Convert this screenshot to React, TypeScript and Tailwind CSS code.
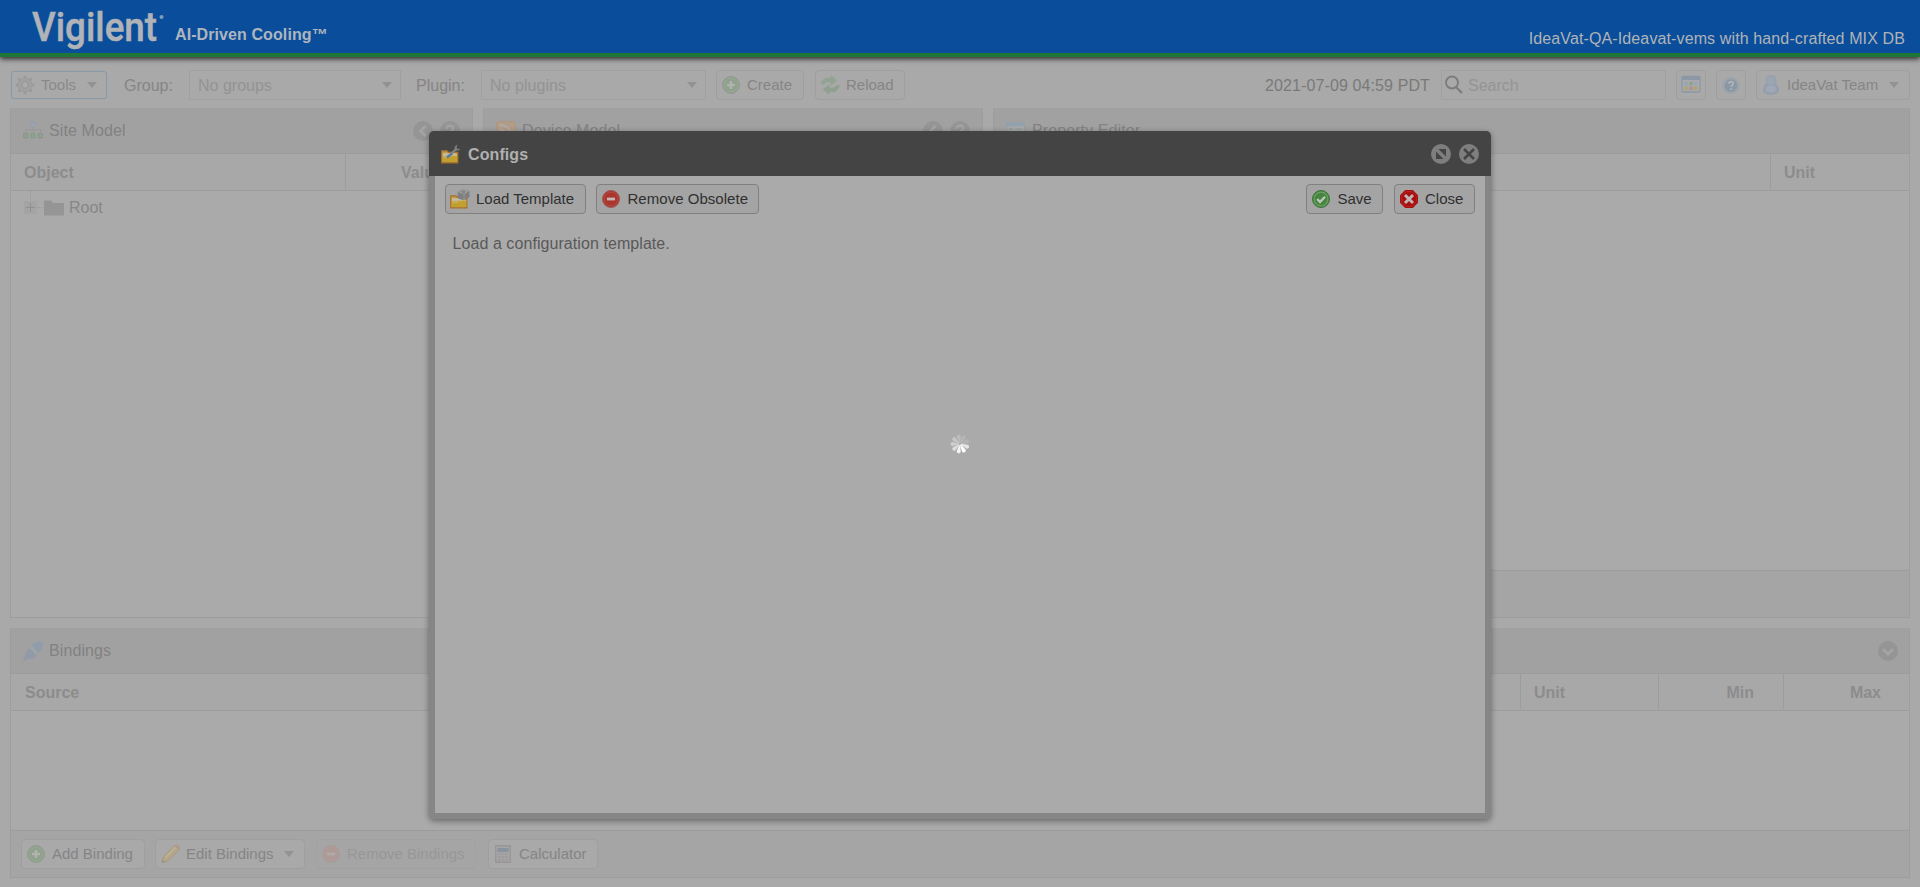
import React from "react";

type Kids = { children?: React.ReactNode; className?: string };

const Svg = ({ children, className = "" }: Kids) => (
  <svg viewBox="0 0 20 20" className={"block h-5 w-5 shrink-0 " + className}>{children}</svg>
);

const Gear = () => (
  <Svg>
    <g stroke="#9a9a9a" strokeWidth="3">
      {[0, 45, 90, 135].map((a) => (
        <path key={a} d="M10 .7v18.6" transform={`rotate(${a} 10 10)`} />
      ))}
    </g>
    <circle cx="10" cy="10" r="6.800" fill="#a2a2a2" stroke="#9b9b9b" />
    <circle cx="10" cy="10" r="3.600" fill="none" stroke="#9a9a9a" strokeWidth="1.400" />
    <circle cx="10" cy="10" r="2.200" fill="#ababab" />
  </Svg>
);
const PlusBall = () => (
  <Svg>
    <circle cx="10" cy="10" r="8.500" fill="#8fa08c" stroke="#939e91" />
    <circle cx="10" cy="10" r="6.600" fill="none" stroke="#98a995" />
    <path d="M10 6v8M6 10h8" stroke="#b0b3ae" strokeWidth="2.600" />
  </Svg>
);
const MinusBall = ({ faded = false }: { faded?: boolean }) => (
  <Svg>
    <circle cx="10" cy="10" r="8.500" fill={faded ? "#ad9996" : "#a8352e"} stroke={faded ? "#aa9d9b" : "#9c5a56"} />
    <circle cx="10" cy="10" r="6.800" fill="none" stroke={faded ? "#ae9e9b" : "#b8493f"} />
    <path d="M6 10h8" stroke={faded ? "#b1aaa9" : "#c6b5b3"} strokeWidth="2.800" />
  </Svg>
);
const Reload = () => (
  <Svg>
    <path d="M1 9C2 3.500 7 2 11 3.500V.5l6 5-6 5V7.500C8 6.500 5 7 4.500 9.500z" fill="#90a491" stroke="#96a396" strokeWidth=".6" />
    <path d="M19.500 10.500c-1 6-6 7.500-10.500 6v3l-6-5 6-5v3c3 1 6 .5 7-2z" fill="#8fa090" stroke="#96a396" strokeWidth=".6" />
  </Svg>
);
const SiteTree = () => (
  <Svg>
    <path d="M10 6v4M2.500 12V8.700h15V12M10 9v3" fill="none" stroke="#989898" />
    <rect x="8" y="1.500" width="4" height="4" fill="#9ca4ae" stroke="#93a0af" />
    {[0.7, 8, 15.3].map((x) => (
      <rect key={x} x={x} y="12.700" width="4" height="4" fill="#92a391" stroke="#849883" />
    ))}
  </Svg>
);
const Feed = () => (
  <Svg>
    <rect x=".5" y=".5" width="19" height="19" rx="2" fill="#b09d89" stroke="#b0957d" />
    <circle cx="5" cy="15" r="1.700" fill="#b3aaa2" />
    <path d="M3.500 8.500a8 8 0 0 1 8 8M3.500 4a12.500 12.500 0 0 1 12.500 12.500" fill="none" stroke="#b3aaa2" strokeWidth="2" />
  </Svg>
);
const Form = () => (
  <Svg>
    <rect x=".6" y="1.600" width="18" height="16" rx="1.500" fill="#a7a9ab" stroke="#919ea9" />
    <rect x="1" y="2" width="17.200" height="3.200" fill="#93a0ad" />
    <path d="M3 8h4M3 11h4M3 14h4" stroke="#9299a0" strokeWidth="1.300" />
    <path d="M9 8h8M9 11h5" stroke="#9c9c9c" strokeWidth="1.300" />
  </Svg>
);
const Plug = () => (
  <Svg>
    <path d="M.5 19.500v-2l1.500-2c0-4 1.500-6 5-8.500l7 7c-2 3-5 4.500-9.500 3.500L3 19.500z" fill="#909aa8" stroke="#979ea8" strokeWidth=".7" />
    <path d="M8.500 4.500c3-4 7-4 11-4 .5 3.500.5 8.500-4.500 11.500z" fill="#919cab" stroke="#9ba2ab" strokeWidth=".7" />
    <path d="M7 7 8.500 5.500l6 6.500-1.500 1.500z" fill="#a3a5a8" />
  </Svg>
);
const Pencil = () => (
  <Svg>
    <path d="m1 18.500.8-5L13 2c2-1.500 6 1 5.500 3.500L6.500 17z" fill="#b3a588" stroke="#a69677" strokeWidth=".8" />
    <path d="M4.500 13.500 14.500 3.500" stroke="#bbb193" strokeWidth="2.200" />
    <path d="m13.500 1.800 5 4 .5-3-2.500-2z" fill="#ad9a93" />
    <path d="m1 18.700.6-3 2.400 2.200z" fill="#92928e" />
  </Svg>
);
const Calculator = () => (
  <Svg>
    <rect x="2.700" y="1.700" width="14.600" height="16.600" fill="#a5a5a5" stroke="#979797" strokeWidth="1.400" />
    <rect x="4.500" y="4" width="11" height="4" fill="#8993a0" />
    {[10, 13, 16].map((y) => (
      <path key={y} d={`M5 ${y}h2.500M8.700 ${y}h2.500M12.400 ${y}h2.500`} stroke={y === 16 ? "#a39894" : "#999"} strokeWidth="1.500" />
    ))}
  </Svg>
);
const Calendar = () => (
  <Svg>
    <rect x="1" y="1.500" width="18" height="15.500" rx="1" fill="#a8aaab" stroke="#8c98a5" strokeWidth="1.300" />
    <rect x="1" y="1.500" width="18" height="3.500" fill="#8c98a5" />
    <rect x="3.500" y="6.700" width="3.600" height="3.600" fill="#97a7b1" />
    <rect x="8.200" y="6.700" width="3.600" height="3.600" fill="#90a389" />
    <rect x="12.900" y="6.700" width="3.600" height="3.600" fill="#97a7b1" />
    <rect x="3.500" y="11.500" width="3.600" height="3.600" fill="#b0a07c" />
    <rect x="8.200" y="11.500" width="3.600" height="3.600" fill="#ad9389" />
    <rect x="12.900" y="11.500" width="3.600" height="3.600" fill="#b0a07c" />
  </Svg>
);
const HelpBall = () => (
  <Svg>
    <circle cx="10" cy="10.500" r="8.700" fill="#9da4aa" />
    <circle cx="10" cy="10.500" r="6.300" fill="#8996a5" />
    <path d="M7.800 8.800c0-3 4.600-2.800 4.400-.3C12 10 10.200 10.200 10.200 12M10.200 13.200v1.700" stroke="#b0b3b6" strokeWidth="1.900" fill="none" />
  </Svg>
);
const Person = () => (
  <Svg>
    <path d="M2.500 16c-.3-4 .7-5.500 3.500-7h8c2.800 1.500 3.800 3 3.500 7-.3 4.300-14.700 4.300-15 0z" fill="#96a1b0" stroke="#8e99a8" strokeWidth=".7" />
    <rect x="5" y=".8" width="10" height="9.700" rx="3.500" fill="#9ba5b2" stroke="#919ca9" strokeWidth=".7" />
    <ellipse cx="10" cy="14" rx="5" ry="3.500" fill="#9fa8b4" />
  </Svg>
);
const OpenFolder = ({ tool }: { tool: "wrench" | "box" }) => (
  <Svg>
    <path d="M.7 18.800V6.800H6L7.500 8.300h9.300v10.500z" fill="#bf9d4c" stroke="#a8702a" strokeWidth="1.200" />
    <path d="M1.800 9.300h14v2.500h-14z" fill="#c4bda6" />
    <path d="M1.500 18v-5.500h6L9 11h7.300v7z" fill="#c2a030" />
    <path d="M2 13h5.800l1.500-1.400h6.700" stroke="#cdb97a" fill="none" />
    {tool === "wrench" ? (
      <>
        <path d="m6 13.500 5.500-4.500" stroke="#5a78a3" strokeWidth="2.400" />
        <path d="m10.500 9.300 4.500-4" stroke="#7e848b" strokeWidth="2.200" />
        <path d="M16.500.8c-2.500.5-3.500 2.700-2.500 4.600 1.500 1.700 4 1.500 5.200-.7l-2.700.4-1-1.800z" fill="#808080" />
      </>
    ) : (
      <>
        <path d="m7.500 3.500 5-3 7 1.500v6L14 11.500l-6-2z" fill="#7f7f7f" />
        <path d="m8.500 3.400 4.500-2.400 6 1.300-4.500 3z" fill="#9e9e9e" />
        <path d="M14 5v6" stroke="#999" />
        <circle cx="13.700" cy="3" r="1.500" fill="#808080" />
      </>
    )}
  </Svg>
);
const CheckBall = () => (
  <Svg>
    <circle cx="10" cy="10" r="8.500" fill="#468540" stroke="#3b733b" />
    <circle cx="10" cy="10" r="6.900" fill="none" stroke="#6fa065" strokeWidth="1.200" />
    <path d="m6.200 10 2.800 3 5-5.300" fill="none" stroke="#bdc5bb" strokeWidth="2.400" />
  </Svg>
);
const StopCross = () => (
  <Svg>
    <path d="M6.200 1h7.600L19 6.200v7.600L13.800 19H6.200L1 13.800V6.200z" fill="#a80d0f" />
    <path d="M6.800 2.700h6.400l4.100 4.100v6.400l-4.100 4.100H6.800l-4.100-4.100V6.800z" fill="none" stroke="#b92f2d" strokeWidth=".8" />
    <path d="m6 6 8 8m0-8-8 8" stroke="#bfb5b5" strokeWidth="3" />
  </Svg>
);
const Round = ({ kind }: { kind: "left" | "help" | "down" }) => (
  <Svg>
    <circle cx="10" cy="10" r="10" fill="#959595" />
    {kind === "left" && <path d="m12.500 5-5 5 5 5" fill="none" stroke="#a4a4a4" strokeWidth="2.600" />}
    {kind === "down" && <path d="m5 8 5 5 5-5" fill="none" stroke="#a4a4a4" strokeWidth="2.800" />}
    {kind === "help" && (
      <path d="M6.800 7.700c.2-4.200 6.700-3.800 6.400-.4-.2 2-3 2.200-3 4.700M10.200 13.400v2.500" fill="none" stroke="#a4a4a4" strokeWidth="2.300" />
    )}
  </Svg>
);

const Caret = ({ className = "" }: { className?: string }) => (
  <svg viewBox="0 0 10 6" className={"block h-[6px] w-[10px] shrink-0 " + className}>
    <path d="M0 0h10L5 6z" fill="#929292" />
  </svg>
);

const Btn = ({ children, className = "" }: Kids) => (
  <div className={"flex h-[30px] shrink-0 items-center rounded-[4px] border border-[#9f9f9f] text-[15px] text-[#858585] " + className}>
    {children}
  </div>
);
const DialogBtn = ({ children, className = "" }: Kids) => (
  <div className={"flex h-[30px] shrink-0 items-center rounded-[4px] border border-[#808080] bg-[#a4a4a4] text-[15px] text-[#303030] " + className}>
    {children}
  </div>
);
const PanelHead = ({ icon, title, children }: { icon: React.ReactNode; title: string; children?: React.ReactNode }) => (
  <div className="flex h-[45px] shrink-0 items-center border-b border-[#9c9c9c] bg-[#a1a1a1] pr-3 pb-px pl-3">
    {icon}
    <span className="ml-[6px] flex-1 tracking-[0.1px] text-[#828282]">{title}</span>
    <div className="flex gap-[7px]">{children}</div>
  </div>
);
const Col = ({ children, className = "" }: Kids) => (
  <div className={"flex h-[35px] items-center border-[#9c9c9c] pt-[3px] " + className}>{children}</div>
);

function Toolbar() {
  return (
    <div className="flex h-[30px] items-center px-[10px]">
      <div className="ml-px flex h-[28px] w-[96px] shrink-0 items-center rounded-[3px] border border-[#8a99a6] pl-[3px] text-[15px] text-[#898989] shadow-[0_0_1px_#8a99a6]">
        <Gear />
        <span className="ml-[6px]">Tools</span>
        <Caret className="ml-[11px]" />
      </div>
      <span className="mt-px ml-[17px] w-[65px] text-[#858585]">Group:</span>
      <div className="flex h-[30px] w-[212px] items-center justify-between border border-[#a0a0a0] pr-[8px] pl-2 text-[#939393]">
        <span className="mt-px">No groups</span>
        <Caret />
      </div>
      <span className="mt-px ml-[15px] w-[65px] text-[#858585]">Plugin:</span>
      <div className="flex h-[30px] w-[225px] items-center justify-between border border-[#a0a0a0] pr-[8px] pl-2 text-[#939393]">
        <span className="mt-px tracking-[0.05px]">No plugins</span>
        <Caret />
      </div>
      <Btn className="ml-[10px] w-[88px] pl-1"><PlusBall /><span className="ml-[6px]">Create</span></Btn>
      <Btn className="ml-[11px] w-[90px] pl-1"><Reload /><span className="ml-[6px]">Reload</span></Btn>
      <div className="flex-1" />
      <span className="mt-px mr-[11px] tracking-[0.11px] text-[#797979]">2021-07-09 04:59 PDT</span>
      <div className="flex h-[30px] w-[225px] items-center border border-[#a0a0a0] pl-[2px] text-[#949494]">
        <Svg>
          <circle cx="8" cy="7.500" r="6" fill="none" stroke="#7c7c7c" strokeWidth="1.900" />
          <path d="m12 12 6 6" stroke="#7c7c7c" strokeWidth="2.200" />
        </Svg>
        <span className="mt-px ml-1">Search</span>
      </div>
      <Btn className="ml-[10px] w-[30px] justify-center"><Calendar /></Btn>
      <Btn className="ml-[10px] w-[30px] justify-center"><HelpBall /></Btn>
      <Btn className="ml-[10px] w-[154px] pl-1">
        <Person />
        <span className="ml-[6px]">IdeaVat Team</span>
        <Caret className="ml-[11px]" />
      </Btn>
    </div>
  );
}

function Dialog() {
  return (
    <div className="absolute top-[131px] left-[429px] flex h-[688px] w-[1062px] flex-col rounded-[5px] bg-[#868686] shadow-[0_2px_6px_rgba(0,0,0,0.4)]">
      <div className="flex h-[45px] shrink-0 items-center rounded-t-[5px] bg-[#444] pr-3 pl-3">
        <OpenFolder tool="wrench" />
        <span className="mt-[2px] ml-[7px] flex-1 font-bold tracking-[0.1px] text-[#b0b0b0]">Configs</span>
        <Svg className="mr-2">
          <circle cx="10" cy="10" r="10" fill="#7e7e7e" />
          <path d="M7.500 5H15v7.500zM5 7.500V15h7.500z" fill="#444" />
        </Svg>
        <Svg>
          <circle cx="10" cy="10" r="10" fill="#7e7e7e" />
          <path d="m5 5 10 10M15 5 5 15" stroke="#444" strokeWidth="2.500" />
        </Svg>
      </div>
      <div className="mx-[6px] mb-[6px] flex-1 bg-[#aaa]">
        <div className="flex px-[10px] pt-2">
          <DialogBtn className="w-[141px] pl-1"><OpenFolder tool="box" /><span className="ml-[6px]">Load Template</span></DialogBtn>
          <DialogBtn className="ml-[10px] w-[163px] pl-1"><MinusBall /><span className="ml-[6.500px] tracking-[0.03px]">Remove Obsolete</span></DialogBtn>
          <div className="flex-1" />
          <DialogBtn className="w-[77px] pl-1"><CheckBall /><span className="ml-[6.500px]">Save</span></DialogBtn>
          <DialogBtn className="ml-[11px] w-[81px] pl-1"><StopCross /><span className="ml-[6px]">Close</span></DialogBtn>
        </div>
        <p className="mt-[18px] ml-[17.500px] tracking-[0.07px] text-[#595959]">Load a configuration template.</p>
      </div>
    </div>
  );
}

const petals = ["#bcbcbc", "#b6b6b6", "#b4b4b4", "#e4e4e4", "#fff", "#f4f4f4", "#dcdcdc", "#cecece", "#c6c6c6"];

export default function App() {
  return (
    <div className="relative flex h-[887px] w-[1920px] flex-col overflow-hidden bg-[#a9a9a9] font-['Liberation_Sans',Arial,sans-serif] text-[16px] leading-[24px]">
      <header className="z-10 flex h-[57px] shrink-0 items-start border-b-4 border-[#1e7638] bg-[#0a4e9b] pr-[15px] pl-[32px] shadow-[0_2px_5px_rgba(0,0,0,0.75)]">
        <svg viewBox="0 0 135 53" className="h-[53px] w-[135px] shrink-0 overflow-visible">
          <text x="0" y="41" textLength="125" lengthAdjust="spacingAndGlyphs" className="fill-[#b0b3b8] stroke-[#b0b3b8] font-['Roboto',sans-serif] text-[41px] font-medium [stroke-width:0.5px]">Vigilent</text>
          <circle cx="129.500" cy="17" r="2" fill="#7f9cbd" />
        </svg>
        <span className="mt-[23px] ml-[8px] flex-1 font-bold tracking-[0.09px] text-[#aeb5be]">AI-Driven Cooling™</span>
        <span className="mt-[27px] tracking-[0.12px] text-[#b0b3b7]">IdeaVat-QA-Ideavat-vems with hand-crafted MIX DB</span>
      </header>

      <div className="h-[13px] shrink-0" />
      <Toolbar />

      <main className="mt-2 flex h-[510px] shrink-0 gap-[10px] px-[10px]">
        <section className="flex w-[463px] flex-col border border-[#9d9d9d] border-t-[#a1a1a1] bg-[#aaa]">
          <PanelHead icon={<SiteTree />} title="Site Model">
            <Round kind="left" />
            <Round kind="help" />
          </PanelHead>
          <div className="flex h-[37px] shrink-0 border-b border-[#9c9c9c] bg-[#a8a8a8] font-bold text-[#8c8c8c]">
            <Col className="w-[335px] border-r pl-[13px]">Object</Col>
            <Col className="flex-1 pl-[55px]">Value</Col>
          </div>
          <div className="flex h-[34px] items-center pl-[13px] text-[#878787]">
            <svg viewBox="0 0 18 34" className="h-[34px] w-[18px]">
              <rect y="10" width="13" height="13" fill="#a2a5a4" />
              <path d="M6.500 0v10M13 16.500h5" stroke="#989898" strokeDasharray="1 1" />
              <path d="M6.500 12v9M2 16.500h9" stroke="#8f8f8f" />
            </svg>
            <Svg className="ml-[2px]">
              <path d="M0 2.500h7L9 5h11v12.500H0z" fill="#959595" />
            </Svg>
            <span className="ml-[5px]">Root</span>
          </div>
        </section>

        <section className="flex w-[500px] flex-col border border-[#9d9d9d] border-t-[#a1a1a1] bg-[#aaa]">
          <PanelHead icon={<Feed />} title="Device Model">
            <Round kind="left" />
            <Round kind="help" />
          </PanelHead>
        </section>

        <section className="flex flex-1 flex-col border border-[#9d9d9d] border-t-[#a1a1a1] bg-[#aaa]">
          <PanelHead icon={<Form />} title="Property Editor" />
          <div className="flex h-[37px] shrink-0 border-b border-[#9c9c9c] bg-[#a8a8a8] font-bold text-[#8c8c8c]">
            <Col className="flex-1" />
            <Col className="w-[139px] border-l pl-[13px]">Unit</Col>
          </div>
          <div className="flex-1" />
          <div className="h-[47px] border-t border-[#9c9c9c] bg-[#a5a5a5]" />
        </section>
      </main>

      <section className="mx-[10px] mt-[10px] flex h-[250px] shrink-0 flex-col border border-[#9d9d9d] border-t-[#a1a1a1] bg-[#aaa]">
        <PanelHead icon={<Plug />} title="Bindings">
          <div className="-mr-px"><Round kind="down" /></div>
        </PanelHead>
        <div className="flex h-[37px] shrink-0 border-b border-[#9c9c9c] bg-[#a8a8a8] font-bold text-[#8c8c8c]">
          <Col className="flex-1 pl-[14px]">Source</Col>
          <Col className="w-[138px] border-l pl-[13px]">Unit</Col>
          <Col className="w-[125px] justify-end border-l pr-[29px]">Min</Col>
          <Col className="w-[126px] justify-end border-l pr-[28px]">Max</Col>
        </div>
        <div className="flex-1" />
        <div className="flex h-[47px] items-center border-t border-[#9c9c9c] bg-[#a5a5a5] pl-[10px]">
          <Btn className="w-[124px] bg-[#a9a9a9] pl-1"><PlusBall /><span className="ml-[6px]">Add Binding</span></Btn>
          <Btn className="ml-[10px] w-[150px] bg-[#a9a9a9] pl-[5px]"><Pencil /><span className="ml-[5px]">Edit Bindings</span><Caret className="ml-[10px]" /></Btn>
          <Btn className="ml-[11px] w-[160px] border-[#a1a1a1]! pl-1 text-[#979797]!"><MinusBall faded /><span className="ml-[6px]">Remove Bindings</span></Btn>
          <Btn className="ml-[12px] w-[110px] bg-[#a9a9a9] pl-1"><Calculator /><span className="ml-[6px]">Calculator</span></Btn>
        </div>
      </section>

      <Dialog />

      <svg viewBox="0 0 20 20" className="absolute top-[434px] left-[950px] h-5 w-5">
        {petals.map((c, i) => (
          <path key={i} d="M9.500 9 8 2.500a2 2 0 0 1 4 0L10.500 9z" fill={c} transform={`rotate(${i * 40 - 10} 10 10)`} />
        ))}
      </svg>
    </div>
  );
}
